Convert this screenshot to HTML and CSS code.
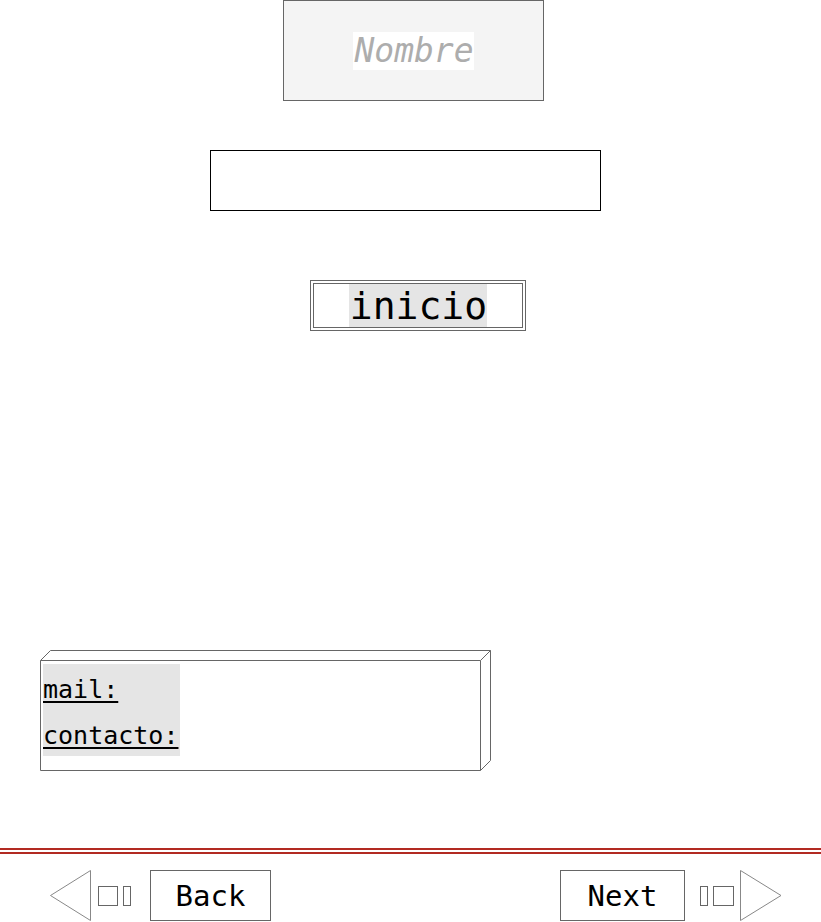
FILE: index.html
```html
<!DOCTYPE html>
<html lang="es">
<head>
<meta charset="utf-8">
<title>Inicio</title>
<link rel="stylesheet" href="styles.css">
</head>
<body>
<div class="page">
  <div class="name-box"><span class="name-label">Nombre</span></div>
  <div class="text-input"></div>
  <div class="start-btn"><div class="start-inner"><span class="start-label">inicio</span></div></div>
  <div class="contact">
    <svg class="contact-frame" width="451" height="121" viewBox="0 0 451 121">
      <path d="M0.5 10.5 L10.5 0.5 L450.5 0.5 L440.5 10.5 Z M440.5 10.5 L440.5 120.5 L450.5 110.5 L450.5 0.5 M0.5 10.5 L0.5 120.5 L440.5 120.5" fill="none" stroke="#666" stroke-width="1"/>
    </svg>
    <div class="contact-body">
      <div class="contact-list">
        <a class="contact-link" href="#">mail:</a>
        <a class="contact-link" href="#">contacto:</a>
      </div>
    </div>
  </div>
  <div class="rule"></div>
  <div class="nav">
    <div class="nav-left">
      <svg class="tri" width="42" height="51" viewBox="0 0 42 51"><path d="M40.5 0.5 L0.5 25.5 L40.5 50.5 Z" fill="none" stroke="#888" stroke-width="1"/></svg>
      <span class="glyph-sq gl-1"></span><span class="glyph-nr gl-2"></span>
      <a class="nav-btn back" href="#">Back</a>
    </div>
    <div class="nav-right">
      <a class="nav-btn next" href="#">Next</a>
      <span class="glyph-nr gl-3"></span><span class="glyph-sq gl-4"></span>
      <svg class="tri tri-right" width="42" height="51" viewBox="0 0 42 51"><path d="M0.5 0.5 L41 25.5 L0.5 50.5 Z" fill="none" stroke="#888" stroke-width="1"/></svg>
    </div>
  </div>
</div>
</body>
</html>
```
FILE: styles.css
```css
* { box-sizing: border-box; }
html, body { margin: 0; padding: 0; background: #fff; }
body { font-family: "DejaVu Sans Mono", monospace; color: #000; }
.page { display: flex; flex-direction: column; width: 821px; }

.name-box {
  margin-left: 283px; width: 261px; height: 101px;
  border: 1px solid #666; background: #f4f4f4;
  display: flex; align-items: center; justify-content: center;
}
.name-label {
  font-size: 33px; font-style: italic; color: #adadad;
  background: #fff; line-height: 38px; padding-left: 1px;
}

.text-input {
  margin-top: 49px; margin-left: 210px; width: 391px; height: 61px;
  border: 1px solid #000;
}

.start-btn {
  margin-top: 69px; margin-left: 310px; width: 216px; height: 51px;
  border: 1px solid #666; padding: 2px;
}
.start-inner {
  height: 100%; border: 1px solid #666;
  display: flex; justify-content: center; align-items: stretch;
}
.start-label {
  font-size: 38px; line-height: 44px; background: #e5e5e5; padding: 0 0 0 1px;
}

.contact {
  position: relative; margin-top: 319px; margin-left: 40px;
  width: 451px; height: 121px;
}
.contact-frame { position: absolute; left: 0; top: 0; }
.contact-body { padding: 14px 0 0 3px; display: flex; }
.contact-list {
  display: flex; flex-direction: column; background: #e5e5e5;
  width: 137px; height: 92px; padding-top: 3px;
}
.contact-link {
  flex-shrink: 0;
  font-size: 25px; line-height: 46px; color: #000;
  text-decoration: underline; text-decoration-thickness: 2px; text-underline-offset: 3px;
  white-space: nowrap; height: 46px;
}

.rule {
  margin-top: 77px; width: 821px; height: 6px;
  border-top: 2px solid #b22a22; border-bottom: 2px solid #b22a22;
}

.nav {
  margin-top: 16px; height: 51px;
  display: flex; justify-content: space-between;
}
.nav-left { display: flex; align-items: center; padding-left: 50px; }
.nav-right { display: flex; align-items: center; padding-right: 39px; }
.tri { display: block; }
.glyph-sq, .glyph-nr {
  display: inline-block; height: 20px; border: 1.5px solid #666; margin-top: 1px;
}
.glyph-sq { width: 20px; }
.glyph-nr { width: 8px; }
.gl-1 { margin-left: 6px; }
.gl-2 { margin-left: 5px; }
.gl-3 { margin-left: 15px; }
.gl-4 { margin-left: 5px; width: 21px; }
.tri-right { margin-left: 6px; }
.nav-btn {
  display: flex; align-items: center; justify-content: center;
  height: 51px; border: 1px solid #666; color: #000; text-decoration: none;
  font-size: 29px;
}
.back { width: 121px; margin-left: 19px; }
.next { width: 125px; }
```
